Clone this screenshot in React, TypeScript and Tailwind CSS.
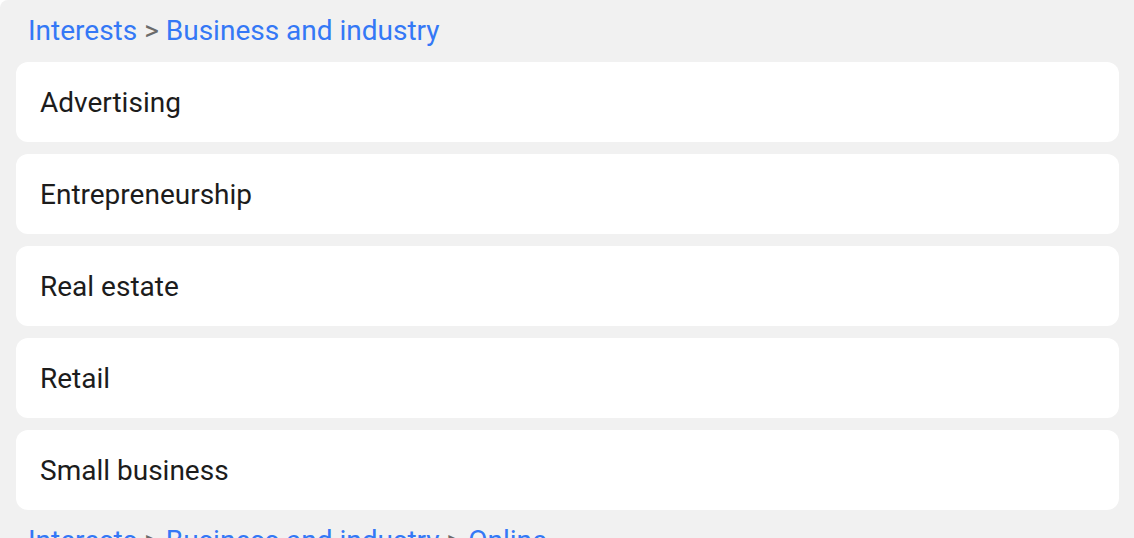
const ITEMS = ['Advertising', 'Entrepreneurship', 'Real estate', 'Retail', 'Small business'];

function Breadcrumb({ parts }: { parts: string[] }) {
  return (
    <div className="px-3 pt-[13px] pb-[13px] text-[28px] leading-[36px] text-[#3478f6] whitespace-nowrap">
      {parts.map((p, i) => (
        <span key={i}>
          {i > 0 && <span className="text-[#6b6b6b]"> &gt; </span>}
          {p}
        </span>
      ))}
    </div>
  );
}

export default function App() {
  return (
    <div className="h-[538px] overflow-hidden bg-white" style={{ fontFamily: 'Roboto, "Liberation Sans", sans-serif' }}>
      <div className="bg-[#f1f1f1] rounded-tl-lg pl-4 pr-[15px] min-h-full">
        <Breadcrumb parts={['Interests', 'Business and industry']} />
        <div className="flex flex-col gap-3">
          {ITEMS.map((item) => (
            <div key={item} className="h-20 bg-white rounded-xl flex items-center px-6 pt-[2px] text-[28px] text-[#1c1c1c]">
              {item}
            </div>
          ))}
        </div>
        <Breadcrumb parts={['Interests', 'Business and industry', 'Online']} />
      </div>
    </div>
  );
}
